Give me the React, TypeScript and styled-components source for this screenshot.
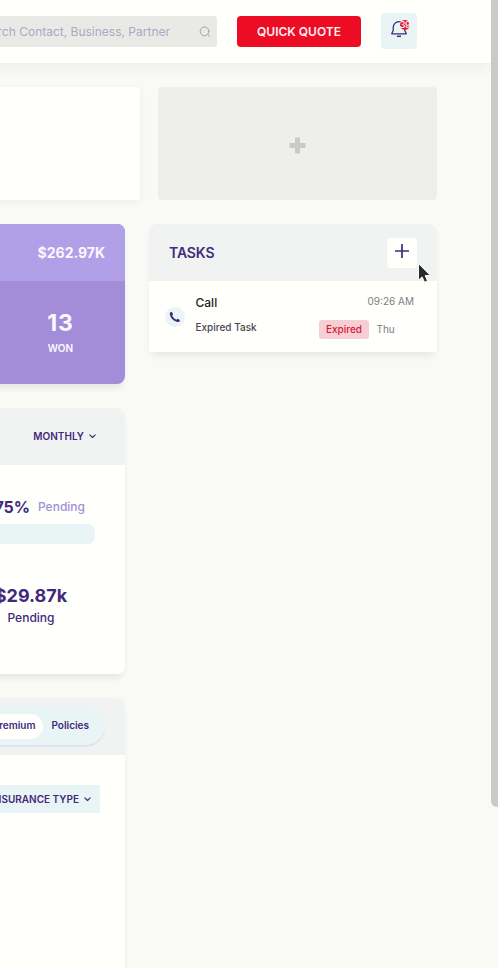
import React from "react";
import styled, { createGlobalStyle } from "styled-components";

const GlobalStyle = createGlobalStyle`
  * { box-sizing: border-box; }
  html, body { margin: 0; overflow: hidden; background: #f9faf6; }
  body { font-family: Inter, "Liberation Sans", sans-serif; color: #41297b; }
  button { font-family: inherit; border: 0; padding: 0; margin: 0; }
  svg { flex: none; }
`;

const Screen = styled.div`
  display: flex;
  width: 498px;
  height: 968px;
  overflow: hidden;
  background: #f9faf6;
`;

const Page = styled.div`
  width: 491px;
  flex: none;
  overflow: hidden;
`;

const ScrollThumb = styled.div`
  width: 12px;
  height: 807px;
  flex: none;
  background: #cacbc7;
  border-radius: 0 0 6px 6px;
`;

const Header = styled.header`
  display: flex;
  align-items: center;
  height: 63px;
  margin-left: -20px;
  padding-left: 20px;
  background: #fffffc;
  box-shadow: 0 3px 14px rgba(0, 0, 0, 0.06);
`;

const Search = styled.div`
  display: flex;
  align-items: center;
  justify-content: flex-end;
  width: 217px;
  height: 31px;
  padding-right: 6px;
  gap: 29px;
  border-radius: 0 3px 3px 0;
  background: #e9eae6;
  color: #a6aac2;
  font-size: 12px;
  line-height: 31px;
  white-space: nowrap;
  overflow: hidden;
`;

const QuoteButton = styled.button`
  width: 124px;
  height: 31px;
  margin-left: 20px;
  border-radius: 4px;
  background: #ec0d25;
  color: #fff0f3;
  font-size: 12px;
  font-weight: 600;
`;

const BellButton = styled.button`
  position: relative;
  width: 36px;
  height: 36px;
  margin: 0 0 1px 20px;
  border-radius: 4px;
  background: #e9f4f5;

  svg { display: block; margin: -4px auto 0; }
`;

const Badge = styled.span`
  position: absolute;
  left: 19px;
  top: 7px;
  width: 10px;
  height: 10px;
  border-radius: 5px;
  background: #df1b32;
  color: #fff;
  font-size: 9px;
  font-weight: 500;
  line-height: 10px;
  letter-spacing: -0.5px;
  display: flex;
  justify-content: center;
`;

const Main = styled.main`
  padding-top: 24px;
`;

const TopRow = styled.div`
  display: flex;
  gap: 18px;
  height: 113px;
  margin-bottom: 24px;
`;

const BlankCard = styled.div`
  width: 160px;
  margin-left: -20px;
  border-radius: 4px;
  background: #fffffc;
  box-shadow: 0 2px 8px rgba(0, 0, 0, 0.05);
`;

const AddWidget = styled.div`
  display: flex;
  align-items: center;
  justify-content: center;
  width: 279px;
  padding-top: 3px;
  border-radius: 4px;
  background: #eeefeb;
`;

const Columns = styled.div`
  display: flex;
  align-items: flex-start;
  gap: 24px;
`;

const LeftColumn = styled.div`
  display: flex;
  flex-direction: column;
  gap: 24px;
  width: 125px;
`;

const Card = styled.section<{ $height: number }>`
  width: 145px;
  height: ${(p) => p.$height}px;
  margin-left: -20px;
  padding-left: 20px;
  border-radius: 8px;
  background: #fffffc;
  box-shadow: 0 6px 9px -3px rgba(0, 0, 0, 0.06), 2px 8px 6px -4px rgba(0, 0, 0, 0.03);
`;

const CardHead = styled.div<{ $right: number }>`
  display: flex;
  align-items: center;
  justify-content: flex-end;
  height: 57px;
  margin-left: -20px;
  padding: 0 ${(p) => p.$right}px 2px 0;
  border-radius: 8px 8px 0 0;
  background: #f1f3f3;
  overflow: hidden;
`;

const PurpleCard = styled(Card)`
  background: #a48dd8;
`;

const PurpleHead = styled(CardHead)`
  padding-bottom: 0;
  background: #b1a0e7;
  color: #fcf7ff;
  font-size: 14px;
  font-weight: 700;
`;

const WonStat = styled.div`
  display: flex;
  flex-direction: column;
  align-items: center;
  width: 121px;
  padding-top: 28px;
  color: #fcf9ff;
`;

const WonCount = styled.div`
  font-size: 23px;
  font-weight: 700;
  line-height: 28px;
  letter-spacing: 0.8px;
`;

const WonLabel = styled.div`
  margin-top: 4px;
  font-size: 10px;
  font-weight: 600;
  line-height: 14px;
`;

const Dropdown = styled.div`
  display: flex;
  align-items: center;
  gap: 4px;
  font-size: 10px;
  font-weight: 600;
  white-space: nowrap;
`;

const ProgressLabel = styled.div`
  display: flex;
  align-items: center;
  justify-content: flex-end;
  width: 85px;
  height: 22px;
  margin-top: 31px;
  gap: 8px;
`;

const Percent = styled.span`
  font-size: 16px;
  font-weight: 700;
`;

const PendingTag = styled.span`
  margin-bottom: 2px;
  color: #a18fd7;
  font-size: 12px;
  font-weight: 500;
`;

const ProgressTrack = styled.div`
  width: 115px;
  height: 20px;
  margin: 6px 0 0 -20px;
  border-radius: 8px;
  background: #e9f4f5;
`;

const PendingTotal = styled.div`
  display: flex;
  flex-direction: column;
  align-items: center;
  width: 72px;
  margin-left: -5px;
  margin-top: 40px;
`;

const Amount = styled.div`
  font-size: 18px;
  font-weight: 700;
  line-height: 24px;
`;

const AmountLabel = styled.div`
  margin-top: 1px;
  font-size: 12px;
  font-weight: 500;
  line-height: 18px;
`;

const Toggle = styled.div`
  display: flex;
  align-items: center;
  justify-content: flex-end;
  flex: none;
  width: 155px;
  height: 39px;
  padding-right: 16px;
  gap: 8px;
  border-radius: 20px;
  background: #e9f4f5;
  box-shadow: 0 2px 0 #dfe2ef;
  font-size: 10px;
  font-weight: 600;
  line-height: 25px;
`;

const TogglePill = styled.span`
  height: 25px;
  margin-top: 2px;
  padding: 0 8px;
  border-radius: 13px;
  background: #fffffc;
  line-height: 23px;
`;

const TypeFilter = styled.div`
  display: flex;
  justify-content: flex-end;
  width: 120px;
  height: 28px;
  margin: 30px 0 0 -20px;
  padding-right: 8px;
  border-radius: 1px;
  background: #e9f4f5;
  overflow: hidden;
`;

const Tasks = styled.section`
  width: 288px;
  height: 128px;
  border-radius: 8px 8px 0 0;
  background: #fffffc;
  box-shadow: 0 6px 9px -3px rgba(0, 0, 0, 0.09);
`;

const TasksHead = styled.div`
  position: relative;
  display: flex;
  align-items: center;
  justify-content: space-between;
  height: 57px;
  padding: 0 20px;
  border-radius: 8px 8px 0 0;
  background: #f1f3f3;
`;

const TasksTitle = styled.h2`
  margin: 0;
  font-size: 14px;
  font-weight: 600;
  letter-spacing: -0.1px;
`;

const AddButton = styled.button`
  width: 30px;
  height: 30px;
  border-radius: 4px;
  background: #fffffc;

  svg { display: block; margin: -4px auto 0; }
`;

const Pointer = styled.svg`
  position: absolute;
  left: 267px;
  top: 38px;
`;

const TaskRow = styled.div`
  display: flex;
  height: 71px;
  padding: 13px 23px 0 16px;
`;

const CallIcon = styled.div`
  display: flex;
  align-items: center;
  justify-content: center;
  width: 20px;
  height: 20px;
  margin-top: 13px;
  border-radius: 50%;
  background: #e9f4f5;
`;

const TaskText = styled.div`
  flex: 1;
  margin-left: 10.5px;
`;

const TaskTitle = styled.div`
  color: #242326;
  font-size: 12px;
  font-weight: 500;
  line-height: 18px;
`;

const TaskSub = styled.div`
  margin-top: 8px;
  color: #48474c;
  font-size: 10px;
  font-weight: 500;
  line-height: 14px;
`;

const TaskMeta = styled.div`
  width: 95px;
  color: #7d7d80;
  font-size: 10px;
`;

const TaskTime = styled.div`
  text-align: right;
  line-height: 15px;
`;

const TaskStatus = styled.div`
  display: flex;
  align-items: center;
  gap: 7.5px;
  margin-top: 11px;
  line-height: 19px;
`;

const ExpiredTag = styled.span`
  width: 50px;
  height: 19px;
  border-radius: 3px;
  background: #f6cfd5;
  color: #d91836;
  font-weight: 500;
  text-align: center;
`;

const Chevron = () => (
  <svg width="9" height="8" viewBox="0 0 9 8" fill="none" stroke="#41297b" strokeWidth="1.15" strokeLinecap="round" strokeLinejoin="round">
    <path d="M1.8 2.8 4.5 5.5 7.2 2.8" />
  </svg>
);

export default function App() {
  return (
    <Screen>
      <GlobalStyle />
      <Page>
        <Header>
          <Search>
            <span>Search Contact, Business, Partner</span>
            <svg width="12" height="12" viewBox="0 0 12 12" fill="none" stroke="#a1a2a0" strokeLinecap="round">
              <circle cx="5.6" cy="5.4" r="4.4" />
              <path d="m8.8 8.7 1.8 1.8" />
            </svg>
          </Search>
          <QuoteButton>QUICK QUOTE</QuoteButton>
          <BellButton>
            <svg width="18" height="18" viewBox="0 0 18 18" fill="none" stroke="#41297b" strokeWidth="1.25">
              <path d="M3.2 10.5V7.5a5.8 5.8 0 0 1 11.6 0v3l1.5 3.3H1.7z" strokeLinejoin="round" />
              <path d="M7 16.3h4" strokeWidth="1.5" />
            </svg>
            <Badge>39</Badge>
          </BellButton>
        </Header>
        <Main>
          <TopRow>
            <BlankCard />
            <AddWidget>
              <svg width="17" height="17" viewBox="0 0 17 17" fill="#cacbc7">
                <path d="M6 0.5h5V6h5.5v5H11v5.5H6V11H0.5V6H6z" />
              </svg>
            </AddWidget>
          </TopRow>
          <Columns>
            <LeftColumn>
              <PurpleCard $height={160}>
                <PurpleHead $right={20}>$262.97K</PurpleHead>
                <WonStat>
                  <WonCount>13</WonCount>
                  <WonLabel>WON</WonLabel>
                </WonStat>
              </PurpleCard>
              <Card $height={266}>
                <CardHead $right={28}>
                  <Dropdown>MONTHLY <Chevron /></Dropdown>
                </CardHead>
                <ProgressLabel>
                  <Percent>75%</Percent>
                  <PendingTag>Pending</PendingTag>
                </ProgressLabel>
                <ProgressTrack />
                <PendingTotal>
                  <Amount>$29.87k</Amount>
                  <AmountLabel>Pending</AmountLabel>
                </PendingTotal>
              </Card>
              <Card $height={290}>
                <CardHead $right={20}>
                  <Toggle>
                    <TogglePill>Premium</TogglePill>
                    <span>Policies</span>
                  </Toggle>
                </CardHead>
                <TypeFilter>
                  <Dropdown>INSURANCE TYPE <Chevron /></Dropdown>
                </TypeFilter>
              </Card>
            </LeftColumn>
            <Tasks>
              <TasksHead>
                <TasksTitle>TASKS</TasksTitle>
                <AddButton>
                  <svg width="16" height="16" viewBox="0 0 16 16" stroke="#41297b" strokeWidth="1.7">
                    <path d="M8 1v14M1 8h14" />
                  </svg>
                </AddButton>
                <Pointer width="18" height="24" viewBox="0 0 18 24">
                  <path d="M2.5 1.5v16.7l3.6-3.3 2.4 5.3 3-1.3-2.3-5.3h5.2z" fill="#292929" stroke="#fff" strokeWidth="1" />
                </Pointer>
              </TasksHead>
              <TaskRow>
                <CallIcon>
                  <svg width="12" height="12" viewBox="0 0 12 12" fill="#41297b">
                    <path d="M1.3 1.2 2.9.9l1.2 2.3-1 1.3c.9 1.9 2.4 3.4 4.3 4.3l1.200-1 2.300 1.200-.3 1.600c-.6.600-1.800.600-3 .2C4.400 9.700 1.900 7.200 1 4.200c-.3-1.200-.2-2.400.3-3Z" />
                  </svg>
                </CallIcon>
                <TaskText>
                  <TaskTitle>Call</TaskTitle>
                  <TaskSub>Expired Task</TaskSub>
                </TaskText>
                <TaskMeta>
                  <TaskTime>09:26 AM</TaskTime>
                  <TaskStatus>
                    <ExpiredTag>Expired</ExpiredTag>
                    <span>Thu</span>
                  </TaskStatus>
                </TaskMeta>
              </TaskRow>
            </Tasks>
          </Columns>
        </Main>
      </Page>
      <ScrollThumb />
    </Screen>
  );
}
